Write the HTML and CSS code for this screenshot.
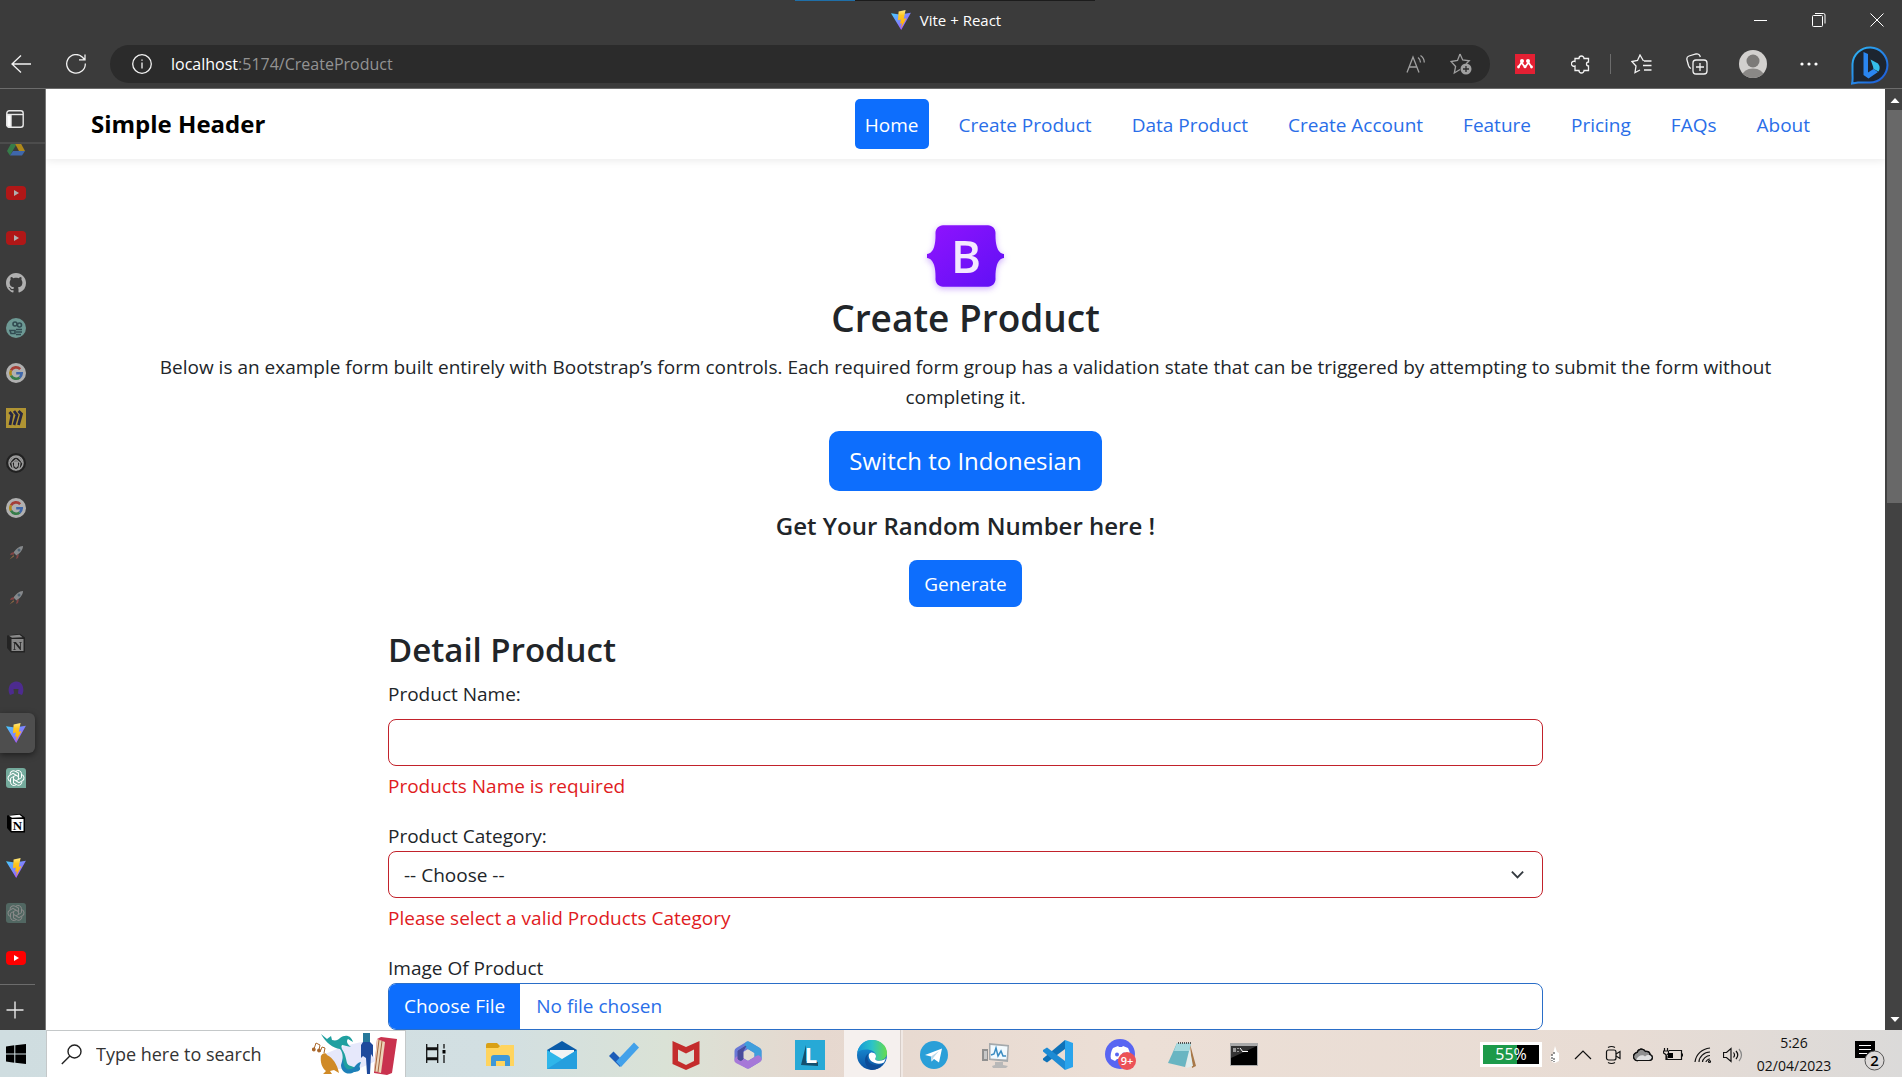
FILE: index.html
```html
<!DOCTYPE html>
<html lang="en">
<head>
<meta charset="utf-8">
<title>Vite + React</title>
<link rel="stylesheet" href="styles.css">
</head>
<body>
<svg class="defs" aria-hidden="true">
  <defs>
    <linearGradient id="vite-a" x1="0" y1="0" x2="1" y2="1"><stop offset="0" stop-color="#41d1ff"/><stop offset="1" stop-color="#bd34fe"/></linearGradient>
    <linearGradient id="vite-b" x1="0" y1="0" x2="0" y2="1"><stop offset="0" stop-color="#ffea83"/><stop offset=".3" stop-color="#ffc61f"/><stop offset="1" stop-color="#ffa800"/></linearGradient>
    <linearGradient id="bs" x1="0" y1="0" x2="1" y2="1"><stop offset="0" stop-color="#9013fe"/><stop offset="1" stop-color="#5f10f5"/></linearGradient>
    <linearGradient id="edge-a" x1="0" y1="0" x2="1" y2="0"><stop offset="0" stop-color="#1597d8"/><stop offset=".5" stop-color="#2cc3c8"/><stop offset="1" stop-color="#66dc4c"/></linearGradient>
    <linearGradient id="edge-b" x1="0" y1="0" x2="0" y2="1"><stop offset="0" stop-color="#1a9be0"/><stop offset="1" stop-color="#0c4fa0"/></linearGradient>
    <linearGradient id="bing" x1="0" y1="0" x2="1" y2="1"><stop offset="0" stop-color="#2fb8f5"/><stop offset="1" stop-color="#1c55d8"/></linearGradient>
  </defs>
  <symbol id="vite" viewBox="0 0 20 20"><path d="M0 3.200 8.700 4.600 19.900 2.800 10.200 20z" fill="url(#vite-a)"/><path d="m14.600 0-7 1.400-.6 8.800 2.900-.6-.8 4.200 1.800-.5-1 5 5.600-10-2.700.5z" fill="url(#vite-b)"/></symbol>
  <symbol id="yt" viewBox="0 0 20 20"><rect y="3" width="20" height="14" rx="4" fill="#f00"/><path d="m8 7 5 3-5 3z" fill="#fff"/></symbol>
  <symbol id="google" viewBox="0 0 20 20"><circle cx="10" cy="10" r="10" fill="#fff"/><g fill="none" stroke-width="2.600"><path d="M14.200 6.200A5.700 5.700 0 0 0 5 7.300" stroke="#ea4335"/><path d="M5 7.300a5.700 5.700 0 0 0 0 5.400" stroke="#fbbc05"/><path d="M5 12.700a5.700 5.700 0 0 0 8.700 1.700" stroke="#34a853"/><path d="M13.700 14.400a5.700 5.700 0 0 0 2-4.100H10.200" stroke="#4285f4"/></g></symbol>
  <symbol id="rocket" viewBox="0 0 20 20"><path d="M17 3c-4 0-7 3-9.500 6.500l3 3C14 10 17 7 17 3z" fill="#b9bec2"/><circle cx="13" cy="7" r="1.500" fill="#5d7f98"/><path d="m8 9-3 1-1 2 4-.5zM11 12l-1 4 2-1 1-4z" fill="#b34a4a"/><path d="m7.500 12-4 4.500 4.500-3z" fill="#c78a4a"/></symbol>
  <symbol id="notion" viewBox="0 0 20 20"><path d="M1 2.500 14 .8 19 4.500v15H5L1 15z" fill="#000"/><path d="m3 2.800 10.500-1 3 2.400L6 4.700z" fill="#fff"/><rect x="5.500" y="6" width="12" height="12" fill="#fff"/></symbol>
  <symbol id="gpt" viewBox="0 0 20 20"><path d="M3 0h14a3 3 0 0 1 3 3v17H3a3 3 0 0 1-3-3V3a3 3 0 0 1 3-3z" fill="#74aa9c"/><g fill="none" stroke="#fff" stroke-width="1"><path id="petal" d="M10 3.200a3.400 3.400 0 0 1 5.500 2.500v4l-5.300 3"/><use href="#petal" transform="rotate(60 10 10)"/><use href="#petal" transform="rotate(120 10 10)"/><use href="#petal" transform="rotate(180 10 10)"/><use href="#petal" transform="rotate(240 10 10)"/><use href="#petal" transform="rotate(300 10 10)"/></g></symbol>
</svg>

<header class="titlebar">
  <span class="loadbar" aria-hidden="true"></span>
  <div class="tab-title"><svg class="i20"><use href="#vite"/></svg><span>Vite + React</span></div>
  <div class="window-buttons">
    <button aria-label="Minimize"><svg width="14" height="14" viewBox="0 0 14 14"><path d="M0 7.500h13"/></svg></button>
    <button aria-label="Restore"><svg width="14" height="14" viewBox="0 0 14 14"><rect x=".5" y="2.500" width="10" height="11" rx="1"/><path d="M3 .5h8.500a1.500 1.500 0 0 1 1.500 1.500v8.500"/></svg></button>
    <button aria-label="Close"><svg width="14" height="14" viewBox="0 0 14 14"><path d="m.5.5 13 13m0-13-13 13"/></svg></button>
  </div>
</header>

<nav class="toolbar" aria-label="Browser toolbar">
  <button class="nav-btn" aria-label="Back"><svg class="i20" viewBox="0 0 20 20"><path d="M20 10H1M10 1.500 1 10l9 8.500"/></svg></button>
  <button class="nav-btn" aria-label="Refresh"><svg class="i20" viewBox="0 0 20 20"><path d="M19.300 9.500A9.300 9.300 0 1 1 16.500 3.200L18.500 5.500M19 .5v5.300h-6"/></svg></button>
  <div class="address">
    <svg class="i20" viewBox="0 0 20 20"><circle cx="10" cy="10" r="9.300"/><path d="M10 8.500v6M10 5.500v1.300"/></svg>
    <p class="url"><b>localhost</b>:5174/CreateProduct</p>
    <button class="addr-btn" aria-label="Read aloud"><svg class="i20" viewBox="0 0 20 20"><path d="M1 18.500 7 3l6 15.500M3 13h8M12 3.500a6 6 0 0 1 2.500 5M14.500 1.500a8.500 8.500 0 0 1 3.800 7"/></svg></button>
    <button class="addr-btn" aria-label="Add to favorites"><svg width="22" height="22" viewBox="0 0 22 22"><path d="m10 1 2.700 6 6.500.8-3 3M10 16.500 4.300 20l1.300-6.500L1 8.500 7.500 7.500 10 1"/><circle cx="16" cy="16" r="5.500" fill="#a0a0a0" stroke="none"/><path d="M16 13v6m-3-3h6" stroke="#2b2b2b"/></svg></button>
  </div>
  <div class="tools">
    <button aria-label="Mendeley"><svg class="i20" viewBox="0 0 20 20"><path fill="#e42033" stroke="none" d="M0 0h20v20H0z"/><g fill="#fff" stroke="none"><circle cx="7" cy="7" r="2"/><circle cx="13" cy="7" r="2"/><circle cx="3.500" cy="13" r="1.400"/><circle cx="10" cy="12.800" r="1.500"/><circle cx="16.500" cy="13" r="1.400"/></g><path d="M3.800 12.500 6.500 8.500 9.500 12.500M10.500 12.500l3-4 2.700 4" stroke="#fff" stroke-width="1.800"/></svg></button>
    <button aria-label="Extensions"><svg class="i20" viewBox="0 0 20 20"><path d="M4 4.500h4a2.500 2.500 0 1 1 5 0h4.500V8a2 2 0 0 0-2 2 2 2 0 0 0 2 2v4.500H13a2.400 2.400 0 1 1-5 0H4V12a2.500 2.500 0 1 1 0-4.500z"/></svg></button>
    <span class="sep"></span>
    <button aria-label="Favorites"><svg width="21" height="20" viewBox="0 0 21 20"><path d="M12.500 7 9 1 6.500 6.500.8 7.500 5 12 4 18.500l5-2.500M13 7h7.500M12 11.500h8.500M13 16h7.500"/></svg></button>
    <button aria-label="Collections"><svg width="22" height="22" viewBox="0 0 22 22"><path d="M5 15.500C3.500 15 3 14 2.500 12.500L1 7c-.5-2 .5-3.500 2-4L10 1c2-.4 3.500.5 4 2l.3 1"/><rect x="7" y="7" width="14" height="14" rx="3"/><path d="M14 10v8m-4-4h8"/></svg></button>
    <button aria-label="Profile"><svg width="28" height="28" viewBox="0 0 28 28"><clipPath id="av"><circle cx="14" cy="14" r="14"/></clipPath><g clip-path="url(#av)" stroke="none"><path fill="#d2d0ce" d="M0 0h28v28H0z"/><circle cx="14" cy="11" r="6.500" fill="#7c7a78"/><ellipse cx="14" cy="26" rx="11" ry="7.500" fill="#8a8886"/></g></svg></button>
    <button aria-label="Settings and more"><svg width="18" height="4" viewBox="0 0 18 4"><g fill="#fff" stroke="none"><circle cx="2" cy="2" r="1.600"/><circle cx="9" cy="2" r="1.600"/><circle cx="16" cy="2" r="1.600"/></g></svg></button>
    <button class="bing" aria-label="Bing"><svg width="38" height="40" viewBox="0 0 38 40"><path d="M1 38.500c1-3 .5-6 .5-10V19A17.500 17.500 0 1 1 19 37.500c-5-.2-9 0-12 0z" fill="#1d2530" stroke="url(#bing)" stroke-width="2"/><path d="M12.500 7 17 9v18.500l5.500-3.500 4.500 3-9.500 6.500-5-3.500z" fill="#2a86f0" stroke="none"/><path d="M19.500 14.500 27 18.500q3 4 .5 8L22.500 24l-.5-2.500z" fill="#35c0ea" stroke="none"/></svg></button>
  </div>
</nav>

<div class="window">
  <aside class="tabs" aria-label="Tabs">
    <button class="tabs-head" aria-label="Tab actions"><svg width="18" height="18" viewBox="0 0 18 18"><rect x=".8" y=".8" width="16.400" height="16.400" rx="2.500"/><path d="M1 4.500h16"/><path d="M1 5h4v12H2.500L1 15.500z" fill="#fff"/></svg></button>
    <ul class="tab-list">
      <li class="dim"><svg class="i20" viewBox="0 0 20 20"><path d="M7 2 1 13l3 4.500L10 7z" fill="#34a853"/><path d="M7 2h6l6 11h-6z" fill="#fbbc04"/><path d="M7 13h12l-3 4.500H4z" fill="#4285f4"/></svg></li>
      <li class="dim"><svg class="i20"><use href="#yt"/></svg></li>
      <li class="dim"><svg class="i20"><use href="#yt"/></svg></li>
      <li class="dim"><svg class="i20" viewBox="0 0 16 16"><path fill="#fff" d="M8 0C3.580 0 0 3.580 0 8c0 3.540 2.290 6.530 5.470 7.590.4.070.55-.17.55-.38 0-.19-.01-.82-.01-1.490-2.010.37-2.530-.49-2.690-.94-.09-.23-.48-.94-.82-1.130-.28-.15-.68-.52-.01-.53.63-.01 1.080.58 1.230.82.72 1.210 1.870.87 2.330.66.07-.52.28-.87.51-1.070-1.780-.2-3.640-.89-3.640-3.950 0-.87.31-1.590.82-2.150-.08-.2-.36-1.020.08-2.120 0 0 .67-.21 2.200.82.64-.18 1.320-.27 2-.27s1.360.09 2 .27c1.530-1.040 2.200-.82 2.200-.82.44 1.100.16 1.920.08 2.120.51.56.82 1.270.82 2.150 0 3.070-1.870 3.750-3.650 3.950.29.25.54.73.54 1.480 0 1.070-.01 1.930-.01 2.200 0 .21.15.46.55.38A8 8 0 0 0 16 8c0-4.420-3.580-8-8-8z"/></svg></li>
      <li class="dim"><svg class="i20" viewBox="0 0 20 20"><circle cx="10" cy="10" r="10" fill="#8fd8d0"/><g fill="none" stroke="#2b5560" stroke-width="1.600"><circle cx="9" cy="6" r="2"/><circle cx="13.500" cy="7" r="2"/><path d="M4 12.500h5v3H5zM10 11.500h6M10 14h6M10 16.500h5"/></g></svg></li>
      <li class="dim"><svg class="i20"><use href="#google"/></svg></li>
      <li class="dim"><svg class="i20" viewBox="0 0 20 20"><path fill="#ffd02f" d="M0 0h20v20H0z"/><path d="m3.500 4 2.500 3-2 10M8 3l3 4-3 10M12.500 3l3 3-3 11" fill="none" stroke="#1b1b45" stroke-width="2.800"/></svg></li>
      <li class="dim"><svg class="i20" viewBox="0 0 20 20"><circle cx="10" cy="10" r="10" fill="#111"/><circle cx="10" cy="10" r="7" fill="none" stroke="#ddd" stroke-width="1.500"/><path d="M3.500 10c2-4 5-6 6.500-6s4.500 2 6.500 6M7 15l-1-5 4-3.500 4 3.500-1 5-3 2z" fill="none" stroke="#ddd" stroke-width="1.300"/><path d="m8 9 2-1 2 1v4l-2 2-2-2z" fill="#ddd"/></svg></li>
      <li class="dim"><svg class="i20"><use href="#google"/></svg></li>
      <li class="dim"><svg class="i20"><use href="#rocket"/></svg></li>
      <li class="dim"><svg class="i20"><use href="#rocket"/></svg></li>
      <li class="faint"><svg class="i20"><use href="#notion"/><text x="11.500" y="16.500" text-anchor="middle" class="notion-n">N</text></svg></li>
      <li class="dim"><svg class="i20" viewBox="0 0 20 20"><path d="M4 17C1 12 3 4 10 3.500S19 12 16 17l-4-1.500.5-4.500h-5l.5 4.500z" fill="#5a22c8"/></svg></li>
      <li><span class="active"><svg class="i20"><use href="#vite"/></svg></span></li>
      <li><svg class="i20"><use href="#gpt"/></svg></li>
      <li><svg class="i20"><use href="#notion"/><text x="11.500" y="16.500" text-anchor="middle" class="notion-n">N</text></svg></li>
      <li><svg class="i20"><use href="#vite"/></svg></li>
      <li class="faint"><svg class="i20"><use href="#gpt"/></svg></li>
      <li><svg class="i20"><use href="#yt"/></svg></li>
    </ul>
    <button class="tabs-new" aria-label="New tab"><svg width="18" height="18" viewBox="0 0 18 18"><path d="M9 .5v17M.5 9h17"/></svg></button>
  </aside>

  <div class="page">
    <header class="site-header">
      <a class="brand" href="#">Simple Header</a>
      <nav class="site-nav">
        <a class="current" href="#">Home</a>
        <a href="#">Create Product</a>
        <a href="#">Data Product</a>
        <a href="#">Create Account</a>
        <a href="#">Feature</a>
        <a href="#">Pricing</a>
        <a href="#">FAQs</a>
        <a href="#">About</a>
      </nav>
    </header>
    <main class="content">
      <section class="intro">
        <svg class="logo" viewBox="0 0 118 94" role="img" aria-label="Bootstrap"><path fill="url(#bs)" d="M24.509 0c-6.733 0-11.715 5.893-11.492 12.284.214 6.140-.064 14.092-2.066 20.577C8.943 39.365 5.547 43.485 0 44.014v5.972c5.547.529 8.943 4.649 10.951 11.153 2.002 6.485 2.280 14.437 2.066 20.577C12.794 88.106 17.776 94 24.510 94H93.500c6.733 0 11.714-5.893 11.491-12.284-.214-6.140.064-14.092 2.066-20.577 2.009-6.504 5.396-10.624 10.943-11.153v-5.972c-5.547-.529-8.934-4.649-10.943-11.153-2.002-6.484-2.280-14.437-2.066-20.577C105.214 5.894 100.233 0 93.500 0z"/><text class="logo-b" x="60" y="73" text-anchor="middle">B</text></svg>
        <h1>Create Product</h1>
        <p>Below is an example form built entirely with Bootstrap’s form controls. Each required form group has a validation state that can be triggered by attempting to submit the form without completing it.</p>
        <button class="btn btn-lg">Switch to Indonesian</button>
        <h2>Get Your Random Number here !</h2>
        <button class="btn">Generate</button>
      </section>
      <form class="product-form">
        <h3>Detail Product</h3>
        <div class="field spaced">
          <label for="name">Product Name:</label>
          <input class="control invalid" id="name" type="text">
          <p class="error">Products Name is required</p>
        </div>
        <div class="field">
          <label for="category">Product Category:</label>
          <div class="select-wrap">
            <select class="control invalid" id="category"><option>-- Choose --</option></select>
            <svg class="chevron" width="15" height="15" viewBox="0 0 16 16"><path d="m2 5 6 6 6-6"/></svg>
          </div>
          <p class="error">Please select a valid Products Category</p>
        </div>
        <div class="field">
          <label for="image">Image Of Product</label>
          <input class="control file" id="image" type="file">
        </div>
      </form>
    </main>
  </div>

  <div class="scrollbar" aria-hidden="true">
    <svg width="17" height="21" viewBox="0 0 17 21"><path d="m10 9 4.500 5h-9z"/></svg>
    <span class="thumb"></span>
    <svg width="17" height="21" viewBox="0 0 17 21"><path d="m10 13 4.500-5h-9z"/></svg>
  </div>
</div>

<footer class="taskbar">
  <button class="start" aria-label="Start"><svg class="i20" viewBox="0 0 20 20"><path d="m0 2.500 8.300-1.200v8.200H0zM9.300 1.200 20 0v9.500H9.300zM0 10.500h8.300v8.200L0 17.500zM9.300 10.500H20V20L9.300 18.800z"/></svg></button>
  <div class="search">
    <svg width="21" height="21" viewBox="0 0 21 21"><circle cx="13.500" cy="7.500" r="6.500"/><path d="M8.800 12 .8 20"/></svg>
    <input type="text" aria-label="Search" placeholder="Type here to search">
    <svg class="art" width="86" height="44" viewBox="0 0 86 44"><path d="M8 24 32 14l22-5 10 20-18 8H14z" fill="#e6e8fb"/><g stroke="#a8662a" stroke-width="1.200" fill="#a8662a"><path d="m2 17 2-6 4 2-1 5M8 20l2-5 3 1-1 5" fill="none"/><circle cx="1.800" cy="17.500" r="1.300"/><circle cx="7" cy="18.500" r="1.300"/></g><path d="M9 24c1-3 5-4 6-1 6 3 10 9 12 18l-5-3-4 1 2 3h-9l3-3c-4-3-6-9-5-15z" fill="#d08a26"/><path d="M9 2 15 7l4-3 1 4c4 1 6 0 8-2 5-4 11-3 13 4l-5-3c-2 2-1 5 3 8l-9-2c-2 3 2 6 3 10 2 6 1 10 6 11l8 3c-5 5-14 4-16-4-1-7 1-11-3-16-7-1-14-6-19-15z" fill="#20a0a0"/><path d="M31 26c0 8 3 13 8 11 5-1 4-6 10-7-1 3-2 4-1 6 1 3-4 4-6 4-6 4-13 0-13-7z" fill="#1d80b8"/><path d="M51 1h7v9l3 3v12l-2-3-1 20h-3l-1-16-3-2-2 2V13l2-3z" fill="#1e4a9c"/><path d="M51 1h7v9h-7z" fill="#26789a"/><path d="m65 7 4-2 16 2-5 34-5 2-13-2z" fill="#c9324e"/><path d="m65 7 8 3-4 31-7-2z" fill="#ecd4b8"/><path d="m67 8-4 31m7-30-4 31" stroke="#a4633c"/></svg>
  </div>
  <button class="taskview" aria-label="Task View"><svg class="i20" viewBox="0 0 20 20"><path d="M.7 0v4h11V0M.7 19v-3.500h11V19M.7 5.500h11v8.500H.7zM18 0v4.500M18 11v8"/><path d="M16.500 6h3v3.500h-3z" fill="#000" stroke="none"/></svg></button>
  <div class="apps">
    <button aria-label="File Explorer"><svg width="30" height="30" viewBox="0 0 30 30"><path d="M1 5q0-2 2-2h9l3 3v6H1z" fill="#d9a016"/><path d="M1 8h12l3-3h13v21H1z" fill="#ffd45e"/><path d="M6 26V18q0-3 3-3h13q3 0 3 3v8h-5v-5h-9v5z" fill="#3e98d8"/></svg></button>
    <button aria-label="Mail"><svg width="30" height="30" viewBox="0 0 30 30"><path d="M0 10 15 1l15 9v8H0z" fill="#0a5ba8"/><path d="M3 10h24v9H3z" fill="#f4f4f4"/><path d="m0 10 15 9L30 10v19H0z" fill="#2fb6ea"/><path d="m0 29 30-19v19z" fill="#2196d8" opacity=".7"/></svg></button>
    <button aria-label="To Do"><svg width="30" height="30" viewBox="0 0 30 30"><path d="m0 16 4.500-4.500L14 21l-3 6z" fill="#1d5cb8"/><path d="M7 21.500 25 2.500 30 7.500 12 27z" fill="#42a1ea"/></svg></button>
    <button aria-label="McAfee"><svg width="30" height="30" viewBox="0 0 30 30"><path d="m1.500 1 13.500 6L28.500 1v23L15 30 1.500 24zM7 9.500v11.500l8 4 8-4V9.500l-8 4z" fill="#c42c2c" fill-rule="evenodd"/></svg></button>
    <button aria-label="Microsoft 365"><svg width="30" height="30" viewBox="0 0 30 30"><path d="M15 5 25 11v8l-10 6-10-6v-8z" fill="none" stroke="#6a79d6" stroke-width="7" stroke-linejoin="round"/><path d="M15 5 25 11v7" fill="none" stroke="#3f9fdc" stroke-width="7" stroke-linejoin="round" stroke-linecap="round"/><path d="m25 19-10 6-10-5" fill="none" stroke="#a678d8" stroke-width="7" stroke-linejoin="round" stroke-linecap="round"/><path d="M5 19v-8l8-5-3 5v8q-2 3-5 0z" fill="#484c9c" stroke="#484c9c" stroke-width="1"/></svg></button>
    <button aria-label="L app"><svg width="30" height="30" viewBox="0 0 30 30"><path d="M0 0h30v30H0z" fill="#27a9d6"/><path d="m11 5-5 20 17 1 0-4-12-1z" fill="#14506e"/><text class="letter-l" x="16" y="23" text-anchor="middle">L</text></svg></button>
    <button class="running" aria-label="Edge"><svg width="30" height="30" viewBox="0 0 30 30"><circle cx="15" cy="15" r="15" fill="url(#edge-b)"/><path d="M.3 12.500C2 4.500 8 0 15 0c9 0 15 6 15 13 0 5-4 7.500-8 7.500-3 0-4.500-1-3.500-2.500C20 15 18 11 13 10 8 9 3 10 .3 12.500z" fill="url(#edge-a)"/><path d="M12 14c1-1.500 3-2 5-1 2 1.200 2.500 3.500 1.500 5-1 1.500.5 2.800 3.500 2.800 3 .1 5.500-1 7-2.800l-2 4.500c-3 1.500-6 1.800-9 .5-5-1.500-7-5.500-6-9z" fill="#fff"/><path d="M12 13c-5 8 3 15 14 11-4 5-9 6.500-13 5.500C7 25 6 17 12 13z" fill="#0d4c98"/></svg></button>
    <button aria-label="Telegram"><svg width="28" height="28" viewBox="0 0 28 28"><circle cx="14" cy="14" r="14" fill="#2a9fd8"/><path d="M5 14 22 7.500l-3 14-5-3.500-2.500 2.500-.5-5-6-1.500z" fill="#fff"/><path d="m11 15.500 8-5.500-5.500 6.500-2 4z" fill="#b9d8ea"/></svg></button>
    <button aria-label="System Monitor"><svg width="28" height="28" viewBox="0 0 28 28"><path d="M0 8h6v12H0z" fill="#909090"/><path d="M2 10h3v8H2z" fill="#c8c8c8"/><path d="m7 2 20 2-1 17L7 19z" fill="#a4a9ac"/><path d="m8.500 4 17 1.500-1 13-16-1z" fill="#f2fafe"/><path d="m9 14 3-1 2-6 2 8 3-5 2 5h3" fill="none" stroke="#3a8cc2" stroke-width="1.500"/><path d="M13 21h8v3l5 1-2 2H11l-1-2 3-1z" fill="#b8b8b8"/></svg></button>
    <button aria-label="Visual Studio Code"><svg width="30" height="30" viewBox="0 0 30 30"><path d="m22 0 8 3v24l-8 3z" fill="#2aa4ec"/><path d="M22 0v9L4 22.500 0 20v-1.500z" fill="#0f72b8"/><path d="M22 30v-9L4 7.500 0 10v1.500z" fill="#1d8bd4"/></svg></button>
    <button aria-label="Discord"><svg width="32" height="32" viewBox="0 0 32 32"><circle cx="16" cy="15" r="15" fill="#5865f2"/><path d="m9 9 5-2 1 1h3l1-1 5 2c2 4 3 8 2 11l-4 2-2-2h-7l-2 2-4-2C6 17 7 12 9 9z" fill="#fff"/><circle cx="13" cy="15.500" r="2" fill="#5865f2"/><circle cx="20" cy="15.500" r="2" fill="#5865f2"/><circle cx="23" cy="22" r="9" fill="#ec5257"/><text class="count" x="23" y="26" text-anchor="middle">9+</text></svg></button>
    <button aria-label="Notepad"><svg width="28" height="28" viewBox="0 0 28 28"><path d="m22 3 6 22-4 2z" fill="#a87848"/><path d="m21 4 4 21-7 2z" fill="#e2ecec"/><path d="M9 2h14l-6 24L0 22z" fill="#69b5c2"/><path d="M9 2h14l-2 8H6z" fill="#a6d9de"/><path d="M10 2h13" stroke="#555" stroke-width="2" stroke-dasharray="1 1"/></svg></button>
    <button aria-label="Command Prompt"><svg width="28" height="24" viewBox="0 0 28 24"><path d="M0 0h28v23H0z" fill="#aaa"/><path d="M1 3h26v19H1z" fill="#000"/><path d="M1 3h26L1 15z" fill="#333"/><path d="M3 6h3M3 8h3M8 5v1M8 8v1M10 5l3 4M13 8.500h5" stroke="#fff"/></svg></button>
  </div>
  <div class="tray">
    <span class="charge"><span class="charge-level" style="width:60%"></span><span class="charge-text">55%</span></span>
    <svg class="plug" width="10" height="18" viewBox="0 0 10 18"><path d="m6 0 2 6 2 1v8l-4 2-3-1-2-5 3-3z" fill="#fff"/><path d="M3 8v7m2-9v3m0 3v4" stroke="#333" stroke-dasharray="2 1"/></svg>
    <svg class="t20" viewBox="0 0 20 20"><path d="m2 14 8-8 8 8"/></svg>
    <svg class="t20" viewBox="0 0 20 20"><rect x="3.500" y="5" width="9.500" height="10" rx="2"/><path d="m13 9 4-2.500v7L13 11M5 2.500q3.500-2 7 0M5 17.500q3.500 2 7 0"/></svg>
    <svg class="t20" viewBox="0 0 20 20"><path d="M5 15.500a4 4 0 0 1-1-8C5 4 10 2.500 12.500 6.500 16 6 17 8 17 9.500c3.500 1 3 6-1 6z" fill="#909090"/><path d="M3 15c2-5 7-6 9-3.500 3-2.500 6-1.500 7 1-.5 3-2 3-4 3H5z" fill="#e0e0e0" stroke="none"/><path d="M5 15.500a4 4 0 0 1-1-8C5 4 10 2.500 12.500 6.500 16 6 17 8 17 9.500c3.500 1 3 6-1 6z"/></svg>
    <svg class="t20" viewBox="0 0 20 20"><path d="M6 5.500h12.500v9H4V11M19.500 8.500v3M1.500 3v3M4.500 3v3M.5 6h5v2q-2 3-2.500 2T.5 8zM3 10v5"/><path d="M5 8h5v5H5z" fill="#000" stroke="none"/></svg>
    <svg class="t20" viewBox="0 0 20 20"><path d="M2 17C3 9 9 4 17 3M6 17c0-5 5-10 11-10M9.500 17c0-3 4-6.500 7.500-6.500M13 17c0-1 2-3 4-3"/><circle cx="16.500" cy="16.500" r="1"/></svg>
    <svg class="t20" viewBox="0 0 20 20"><path d="M.5 7.500h3L8 3.500v13l-4.500-4h-3zM10.500 7.500q2 2.500 0 5M13 6q3.500 4 0 8"/><path d="M16 4q5 6 0 12" stroke="#888"/></svg>
  </div>
  <div class="clock"><time>5:26</time><time>02/04/2023</time></div>
  <button class="notices" aria-label="Notifications"><svg width="30" height="30" viewBox="0 0 30 30"><path d="M0 0h20v17h-6l-4 3v-3H0z"/><path d="M4 4.500h12M4 8.500h12M4 12.500h8" stroke="#fff"/><circle cx="19.500" cy="19.500" r="9.500" fill="#dcd9d8" stroke="#555"/><text class="badge" x="19.500" y="25" text-anchor="middle">2</text></svg></button>
</footer>
</body>
</html>
```
FILE: styles.css
```css
* { box-sizing: border-box; }

body {
  margin: 0;
  height: 100vh;
  display: flex;
  flex-direction: column;
  overflow: hidden;
  background: #3b3b3b;
  color: #212529;
  font: 19px/30px "Open Sans", "Noto Sans", sans-serif;
}

button {
  border: 0;
  padding: 0;
  background: none;
  color: inherit;
  font: inherit;
}

h1, h2, h3, p, ul { margin: 0; padding: 0; }
svg { display: block; flex: none; }
.defs { position: absolute; width: 0; height: 0; }
.i20 { width: 20px; height: 20px; }

/* Title bar */
.titlebar {
  position: relative;
  flex: none;
  height: 40px;
  display: grid;
  grid-template-columns: 1fr auto 1fr;
  align-items: center;
  color: #fff;
  font-size: 15px;
}
.loadbar {
  position: absolute;
  top: 0;
  left: 50%;
  width: 300px;
  height: 1px;
  margin-left: -156px;
  background: linear-gradient(90deg, #1f6fa8 60px, #1c1c1c 60px);
}
.tab-title { grid-column: 2; display: flex; align-items: center; gap: 9px; padding-right: 10px; }
.window-buttons { justify-self: end; display: flex; }
.window-buttons button { width: 58px; height: 40px; display: grid; place-items: center; padding-left: 8px; }
.window-buttons svg { fill: none; stroke: #fff; }

/* Browser toolbar */
.toolbar {
  flex: none;
  height: 49px;
  padding-top: 5px;
  display: flex;
  align-items: flex-start;
  border-bottom: 1px solid #6c6c6c;
}
.toolbar button { display: grid; place-items: center; height: 38px; }
.toolbar svg { fill: none; stroke: #f2f2f2; stroke-width: 1.3; }
.toolbar .nav-btn { width: 55px; padding-right: 14px; }
.address {
  flex: 1;
  height: 38px;
  display: flex;
  align-items: center;
  padding: 0 7px 0 22px;
  border-radius: 19px;
  background: #2b2b2b;
}
.url { flex: 1; padding-left: 19px; font-size: 16px; color: #939393; }
.url b { font-weight: 400; color: #fff; }
.address .addr-btn { width: 45px; }
.address .addr-btn svg { stroke: #a0a0a0; }
.tools { display: flex; align-items: center; padding-left: 7px; }
.tools button { width: 56px; }
.tools .bing { width: 65px; }
.sep { width: 1px; height: 20px; margin: 0 2px 0 1px; background: #6c6c6c; }

/* Window body */
.window { flex: 1; min-height: 0; display: flex; }

.tabs {
  flex: none;
  width: 46px;
  display: flex;
  flex-direction: column;
  border-right: 1px solid #777;
}
.tabs > button { flex: none; padding-left: 6px; }
.tabs > button svg { fill: none; stroke: #e8e8e8; stroke-width: 1.4; }
.tabs-head { height: 55px; padding-top: 6px; border-bottom: 2px solid #4c4c4c; }
.tab-list {
  flex: 1;
  min-height: 0;
  display: flex;
  flex-direction: column;
  justify-content: flex-end;
  overflow: hidden;
  list-style: none;
}
.tab-list li { flex: none; height: 45px; display: flex; align-items: center; padding-left: 6px; }
.tab-list .dim { opacity: .6; }
.tab-list .faint { opacity: .4; }
.active {
  display: flex;
  align-items: center;
  width: 35px;
  height: 40px;
  margin-left: -6px;
  padding-left: 6px;
  border-radius: 0 6px 6px 0;
  background: #4e4e4e;
  box-shadow: 0 2px 6px rgba(0, 0, 0, .5);
}
.notion-n { font: 700 13px "Liberation Serif", serif; fill: #000; }
.tabs > .tabs-new { width: 35px; height: 46px; margin-top: 4px; padding-top: 4px; border-top: 1px solid #6c6c6c; }

.scrollbar {
  flex: none;
  width: 17px;
  display: flex;
  flex-direction: column;
  background: #424242;
}
.scrollbar svg { fill: #fff; }
.thumb { height: 393px; margin: 0 0 auto 2px; background: #686868; }

/* Page */
.page { flex: 1; min-width: 0; overflow: hidden; background: #fff; }
.site-header {
  height: 70px;
  display: flex;
  align-items: center;
  justify-content: space-between;
  padding: 0 55px 0 45px;
  box-shadow: 0 2px 8px rgba(0, 0, 0, .08);
}
.site-header a { text-decoration: none; }
.brand { color: #000; font-size: 24px; font-weight: 700; }
.site-nav { display: flex; align-items: center; }
.site-nav a { padding: 11px 20px 9px; color: #2a6ee8; }
.site-nav .current { margin-right: 10px; padding: 11px 10px 9px; border-radius: 5px; background: #0d6efd; color: #fff; }

.content { padding: 66px 24px 0; }
.intro {
  max-width: 1620px;
  margin: 0 auto;
  display: flex;
  flex-direction: column;
  align-items: center;
  text-align: center;
}
.logo { width: 77px; height: 62px; overflow: visible; filter: drop-shadow(0 2px 3px rgba(111, 16, 245, .35)); }
.logo-b { font: 600 70px "Open Sans", sans-serif; fill: #f3e8ff; }
h1, h2, h3 { font-weight: 600; }
h1 { margin: 7px 0 10px; font-size: 37px; line-height: 48px; }
h2 { margin: 20px 0 19px; font-size: 24px; line-height: 30px; }
h3 { margin-bottom: 8px; font-size: 33px; line-height: 42px; }

.btn {
  height: 47px;
  padding: 0 15px;
  border-radius: 8px;
  background: #0d6efd;
  color: #fff;
}
.btn-lg { height: 60px; margin-top: 19px; padding: 0 20px; border-radius: 10px; font-size: 24px; }

.product-form { width: 65%; max-width: 1155px; margin: 22px auto 0; }
.field { display: flex; flex-direction: column; margin-bottom: 20px; }
.spaced label { margin-bottom: 10px; }
.control {
  width: 100%;
  height: 47px;
  padding: 0 15px;
  border: 1px solid #c2222b;
  border-radius: 8px;
  background: #fff;
  color: #212529;
  font: inherit;
  appearance: none;
}
.error { margin-top: 5px; color: #e01b22; }
.select-wrap { position: relative; }
.chevron { position: absolute; top: 16px; right: 18px; fill: none; stroke: #343a40; stroke-width: 2; pointer-events: none; }
.file { padding: 0; border-color: #2a6ec8; overflow: hidden; color: #2a6ee8; line-height: 45px; }
.file::file-selector-button {
  height: 45px;
  margin: 0 16px 0 0;
  padding: 0 15px;
  border: 0;
  background: #0d6efd;
  color: #fff;
  font: inherit;
}

/* Taskbar */
.taskbar {
  flex: none;
  height: 47px;
  display: flex;
  color: #111;
  background: linear-gradient(90deg, #cfdde0, #d2dfe2 26%, #dae2d6 35%, #e6d8cf 43%, #ecdfd6 60%, #e8dcd4 85%, #dbdad9);
}
.taskbar button { display: grid; place-items: center; }
.start { width: 46px; padding-right: 14px; }
.search {
  width: 360px;
  display: flex;
  align-items: center;
  padding: 0 7px 0 14px;
  border: 1px solid #c4c8c9;
  border-bottom: 0;
  background: #fff;
}
.search svg { fill: none; stroke: #222; stroke-width: 1.4; }
.search .art, .search .art path { stroke-width: 0; }
.search .art g path, .search .art path[stroke] { stroke-width: 1; }
.search input {
  flex: 1;
  min-width: 0;
  padding: 0 0 0 14px;
  border: 0;
  background: none;
  font: 18px/30px "Open Sans", "Noto Sans", sans-serif;
}
.search input::placeholder { color: #333; opacity: 1; }
.taskbar .taskview { width: 63px; padding-right: 4px; }
.taskview svg { fill: none; stroke: #111; stroke-width: 1.3; }
.apps { flex: 1; display: flex; }
.apps button { width: 62px; padding-top: 2px; }
.apps .running { background: linear-gradient(90deg, transparent 3px, #f5f0ee 3px 59px, #d6cdc8 59px 60px, #f0e8e4 60px); }
.letter-l { font: 700 22px "Open Sans", sans-serif; fill: #fff; }
.count { font: 600 11px "Open Sans", sans-serif; fill: #fff; }
.tray { display: flex; align-items: center; gap: 10px; padding: 2px 13px 0 0; }
.t20 { width: 20px; height: 20px; fill: none; stroke: #111; stroke-width: 1.2; }
.charge {
  position: relative;
  display: flex;
  width: 62px;
  height: 25px;
  border: 3px solid #fff;
  background: #000;
}
.charge-level { background: #1c9a4a; }
.charge-text { position: absolute; inset: 0; text-align: center; color: #fff; font-size: 16px; line-height: 19px; }
.plug { margin: 0 4px 0 -3px; }
.clock {
  width: 76px;
  display: flex;
  flex-direction: column;
  align-items: center;
  padding-top: 1px;
  font-size: 14px;
  line-height: 23px;
}
.notices { width: 70px; padding: 4px 0 0 6px; }
.notices text { font: 600 15px "Open Sans", sans-serif; }
```
